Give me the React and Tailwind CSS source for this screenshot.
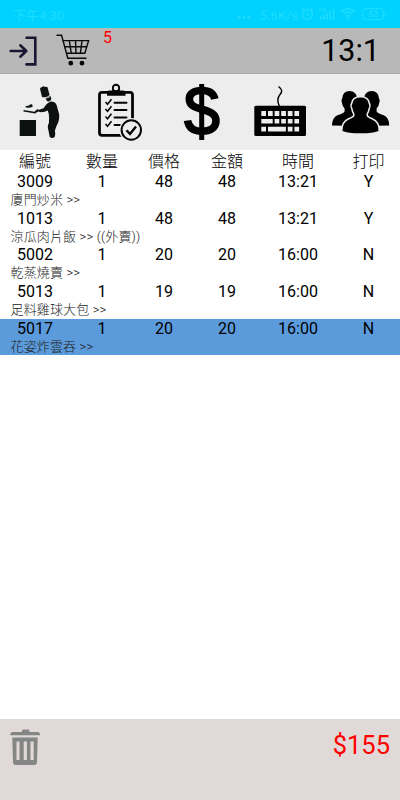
import React from 'react'

const orders = [
  { code: '3009', qty: 1, price: 48, amount: 48, time: '13:21', printed: 'Y', name: '廈門炒米 >>' },
  { code: '1013', qty: 1, price: 48, amount: 48, time: '13:21', printed: 'Y', name: '涼瓜肉片飯 >> ((外賣))' },
  { code: '5002', qty: 1, price: 20, amount: 20, time: '16:00', printed: 'N', name: '乾蒸燒賣 >>' },
  { code: '5013', qty: 1, price: 19, amount: 19, time: '16:00', printed: 'N', name: '足料雞球大包 >>' },
  { code: '5017', qty: 1, price: 20, amount: 20, time: '16:00', printed: 'N', name: '花姿炸雲吞 >>', selected: true },
]

const headers = ['編號', '數量', '價格', '金額', '時間', '打印']

const columns = 'grid grid-cols-[70px_64px_60px_66px_76px_65px] text-center'

const StatusBar = () => (
  <div className="h-7 bg-[#00d2ff] text-[#1cdcff] flex items-center pl-[13px] pr-[13px] text-[13px] leading-none">
    <span className="mt-[2px]">下午4:30</span>
    <svg className="ml-auto mt-1.5" width="14" height="5" viewBox="0 0 14 5" fill="currentColor">
      <circle cx="2" cy="2.5" r="1.5" />
      <circle cx="7" cy="2.5" r="1.5" />
      <circle cx="12" cy="2.5" r="1.5" />
    </svg>
    <span className="ml-[9px] mt-[2px]">5.6K/s</span>
    {/* Alarm, signal, wifi, battery */}
    <svg className="ml-[3px]" width="86" height="16" viewBox="301 6 86 16" fill="none" stroke="currentColor">
      <circle cx="307.5" cy="14.5" r="5" strokeWidth="1.4" />
      <path d="M307.5 12v3h2M302 10.5l2.5-2.3M313 10.5l-2.5-2.3" strokeWidth="1.3" />
      <path d="M321 19.5v-3M324 19.5v-5M327 19.5v-7M330 19.5V11M333.5 19.5V8.5" strokeWidth="1.8" />
      <path d="M341 11.5q7-5.500 14 0M343.300 14q4.700-3.700 9.400 0M345.500 16.500q2.500-2 5 0" strokeWidth="1.600" />
      <circle cx="348" cy="18.300" r=".9" fill="currentColor" />
      <rect x="362.500" y="8.500" width="21" height="11" rx="4" strokeWidth="1.2" />
      <path d="M385.500 12.500v3.500" strokeWidth="1.500" />
      <text x="319" y="12" fontSize="5.500" fontWeight="700" fill="currentColor" stroke="none">HD</text>
      <text x="373.500" y="17.200" fontSize="8.500" fontWeight="700" textAnchor="middle" fill="currentColor" stroke="none">63</text>
    </svg>
  </div>
)

const ExitIcon = () => (
  <svg width="28" height="32" viewBox="9 35 28 32" fill="none" stroke="#1b1730" strokeWidth="2.600" strokeLinecap="round" strokeLinejoin="round">
    <path d="M10.700 51H26M20.300 45.300L26.300 51l-6 5.700" />
    <path d="M26.500 37.800h8.800v26.600h-8.800" strokeLinejoin="miter" />
  </svg>
)

const CartIcon = () => (
  <svg width="34" height="34" viewBox="56 33 34 34" fill="none" stroke="#0a0a0c" strokeWidth="1.400" strokeLinecap="round">
    <path d="M57 35.300h4.600l6.200 23H86" />
    <path d="M63.200 40.600H88.600L84.800 53.300H66.700M64.700 46.800H86.500" />
    <path d="M69.300 40.600l2 12.700M75.500 40.600l.5 12.700M82 40.600l-1.600 12.700" />
    <circle cx="70.800" cy="63.200" r="1.700" fill="#0a0a0c" />
    <circle cx="82" cy="63.200" r="1.700" fill="#0a0a0c" />
  </svg>
)

const ChefIcon = () => (
  <svg width="42" height="54" viewBox="18 85 42 54" fill="#0d1211">
    <path d="M19.700 120H36v16H19.700z" />
    <path d="M42 97l-1.700-7q-.8-2.500 1.500-2.700 1.700-2 3.200-.3 3-.8 3 2l1.600 6q-3 3-7.600 2z" />
    <path d="M45.500 98l5-2.300q1.300 2.700.5 4.300-2 2.300-4.300.8z" />
    <path d="M23.500 110l11 1.700 2.500-2.500 2 .6q2.500-.8 4.500-1.500 2-3.500 4.500-5.300 4.500-3.200 7.800.5 1 1.500 1.200 3l2.200 8q.5 6-2.500 11l-1.800 5q.8 3-.2 6.500-2.500 1.800-5 0l-1.200-6.500q-1.600-4 .4-7.500l.2-5q.3-3.500-1.400-7.500-3 1.800-6.500 1.800l-3-.8-3.200 2-11.500-2z" />
    <path d="M25.500 106.200l3.500-.7q1.500-1.800 3.300-.9l.4 2.200q-4 1.600-7 .4z" />
    <path d="M46 98.300l4.500-1.800" stroke="#eee" strokeWidth=".7" />
  </svg>
)

const OrderIcon = () => (
  <svg width="50" height="60" viewBox="95 82 50 60" fill="none" stroke="#050505">
    <rect x="99.500" y="92.300" width="33" height="43" rx="2.500" strokeWidth="2.800" />
    <path d="M107 95.800v-3.300q0-2 2-2h3q.6-2.500 1-3h6q.5.800 1 3h3q2.500 0 2.500 2v3.300z" fill="#050505" stroke="none" />
    <circle cx="116" cy="88" r="3.200" strokeWidth="1.900" fill="#ededed" />
    <path d="M105.500 102l2 2.200 4-5M105.500 109l2 2.200 4-5M105.500 116.500l2 2.200 4-5M105.500 124l2 2.200 4-5" strokeWidth="1.600" />
    <path d="M114.500 102.700h12M114.500 110h12M114.500 117.500h12M114.500 125h8" strokeWidth="1.900" strokeLinecap="round" />
    <circle cx="131.300" cy="130" r="12" fill="#ededed" stroke="none" />
    <circle cx="131.300" cy="130" r="9.700" strokeWidth="2" />
    <path d="M126.500 130.200l3.500 3.700 6-7.500" strokeWidth="2.400" />
  </svg>
)

const DollarIcon = () => (
  <svg width="38" height="58" viewBox="183 83 38 58" fill="none" stroke="#000">
    <path d="M201.700 84v56" strokeWidth="5" />
    <path d="M214.800 99C213.500 93 209 90.500 201.800 90.500c-7.500 0-12.500 3-12.500 8.500 0 6.500 5.500 8.500 13 10.500 8.500 2.300 13.700 4.800 13.700 11.300 0 7-6 10.500-14 10.500-8.200 0-13.300-3.500-14.500-10.800" strokeWidth="7.600" />
  </svg>
)

const KeyboardIcon = () => (
  <svg width="54" height="54" viewBox="253 86 54 54">
    <path d="M278.500 87.500c4 3 4 5 1.500 8s-3 7-.5 12" fill="none" stroke="#000" strokeWidth="1.400" />
    <rect x="254.300" y="106.800" width="51.700" height="30.300" rx="1.500" />
    <path
      fill="#ededed"
      d="M261.300 112h4.700v5h-4.700zM268 112h4.700v5H268zM274.600 112h4.700v5h-4.700zM281.200 112h4.700v5h-4.700zM287.800 112h4.700v5h-4.700zM294.400 112h4.700v5h-4.700zM261.300 120h11.400v4.600h-11.400zM274.600 120h4.700v4.600h-4.700zM281.200 120h4.700v4.600h-4.700zM287.800 120h4.700v4.600h-4.700zM294.400 120h4.700v4.600h-4.700zM261.300 127.700h4.700v4.800h-4.700zM268 127.700h17.900v4.800H268zM287.800 127.700h4.700v4.800h-4.700zM294.400 127.700h4.700v4.800h-4.700z"
    />
  </svg>
)

const PeopleIcon = () => (
  <svg width="60" height="46" viewBox="331 89 60 46">
    <path d="M332 125.500q0-8 6-10.500 5.500-1.700 6.600-3.500v-3q-2-1.500-2.600-5.500-1.200-3 .2-4.500.5-7.500 7.300-7.500t7.800 7.500v27.500z" />
    <path d="M389.200 125.500q0-8-6-10.500-5.500-1.700-6.600-3.500v-3q2-1.500 2.600-5.500 1.200-3-.2-4.500-.5-7.500-7.300-7.500t-7.800 7.500v27.500z" />
    <path
      d="M342.500 131q0-9 6.500-11.600 5-1.900 5.500-3.700v-2q-1.500-2-2-5.500-1.500-3 0-5 .8-5.700 8-5.700t8 5.700q1.500 2 0 5-.5 3.500-2 5.500v2q.5 1.800 5.500 3.700 6.500 2.600 6.500 11.600-5 2.300-18 2.300t-18-2.300z"
      stroke="#ededed"
      strokeWidth="3"
      paintOrder="stroke"
    />
  </svg>
)

const TrashIcon = () => (
  <svg width="30" height="37" viewBox="10 729 30 37" fill="#848685">
    <path d="M10.300 735.300q0-3.300 2.500-3.300h9.200v-1q0-1.500 1.500-1.500h4.500q1.500 0 1.500 1.500v1h8q2.500 0 2.500 3.300z" />
    <path fillRule="evenodd" d="M12.300 737.500h25.400l-.7 25q-.3 2.500-2.500 2.500h-19q-2.200 0-2.500-2.500zM16.500 741.500v18.500h3v-18.500zM23.700 741.500v18.500h3.200v-18.500zM30.500 741.500v18.500h3.200v-18.500z" />
  </svg>
)

const OrderRow = ({ order }) => (
  <div className={`h-[36.65px] ${order.selected ? 'bg-[#5b9bdb]' : ''}`}>
    <div className={`${columns} h-[19px] text-base leading-[19px] text-black`}>
      <span>{order.code}</span>
      <span>{order.qty}</span>
      <span>{order.price}</span>
      <span>{order.amount}</span>
      <span>{order.time}</span>
      <span>{order.printed}</span>
    </div>
    <div className="pl-[10.5px] text-[13px] leading-[18px] tracking-[0.15px] font-light text-[#222] whitespace-pre">{order.name}</div>
  </div>
)

const App = () => {
  const total = 155

  return (
    <div className="h-screen w-full flex flex-col overflow-hidden bg-white font-['Roboto','Noto_Sans_CJK_TC',sans-serif]">
      <StatusBar />

      <header className="h-[46px] bg-[#b8b8b8] border-b border-[#aaa] flex items-start pl-[9px] pr-5">
        <div className="mt-[7px]"><ExitIcon /></div>
        <div className="ml-[19px] mt-[5px]"><CartIcon /></div>
        <span className="ml-[13px] text-base leading-5 text-[#f00]">5</span>
        <span className="ml-auto text-[30.5px] leading-[45px] text-black">13:1</span>
      </header>

      {/* Toolbar */}
      <nav className="h-[76px] bg-[#ededed] flex items-center pl-[18px]">
        <ChefIcon />
        <div className="ml-[35px]"><OrderIcon /></div>
        <div className="ml-[38px]"><DollarIcon /></div>
        <div className="ml-8"><KeyboardIcon /></div>
        <div className="ml-6"><PeopleIcon /></div>
      </nav>

      <main className="flex-1">
        <div className={`${columns} h-[22.2px] text-base leading-6 font-light text-black`}>
          {headers.map((h) => <span key={h}>{h}</span>)}
        </div>
        {orders.map((order) => <OrderRow key={order.code} order={order} />)}
      </main>

      <footer className="h-[81px] bg-[#e1d9d8] flex items-start justify-between pl-2.5 pr-2.5">
        <div className="mt-[10px]"><TrashIcon /></div>
        <span className="mt-[10px] text-[25.5px] leading-[32px] text-[#f00]">${total}</span>
      </footer>
    </div>
  )
}

export default App
